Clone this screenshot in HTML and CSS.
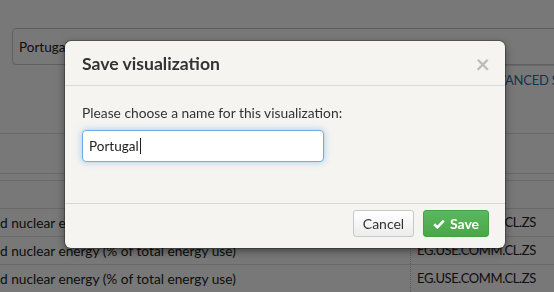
FILE: index.html
```html
<!DOCTYPE html>
<html lang="en">
<head>
    <meta charset="UTF-8">
    <title>Save visualization</title>
    <link rel="stylesheet" href="styles.css">
</head>
<body>

    <div class="page">
        <div class="searchRow">
            <span class="searchLabel">s</span>
            <div class="searchBox">Portugal</div>
        </div>
        <div class="advRow"><a class="advLink" href="#">Advanced search</a></div>
        <div class="band"></div>
        <div class="band thin"></div>
        <div class="band head"></div>
        <div class="indicators">
            <div class="indRow"><div class="indName">d nuclear energy (% of total energy use)</div><div class="indCode">EG.USE.COMM.CL.ZS</div></div>
            <div class="indRow"><div class="indName">d nuclear energy (% of total energy use)</div><div class="indCode">EG.USE.COMM.CL.ZS</div></div>
            <div class="indRow"><div class="indName">d nuclear energy (% of total energy use)</div><div class="indCode">EG.USE.COMM.CL.ZS</div></div>
        </div>
    </div>

    <div class="backdrop"></div>

    <div class="modal">
        <div class="modalHeader">
            <h3>Save visualization</h3>
            <span class="closeBtn">&times;</span>
        </div>
        <div class="modalBody">
            <p>Please choose a name for this visualization:</p>
            <div class="nameInput">Portugal<span class="caret"></span></div>
        </div>
        <div class="modalFooter">
            <button class="btn btnDefault">Cancel</button>
            <button class="btn btnSave">
                <svg width="12" height="10" viewBox="0 0 12 10"><path d="M1.2 5.2 L4.4 8.3 L10.8 1.6" fill="none" stroke="#fff" stroke-width="2.6"/></svg>
                Save
            </button>
        </div>
    </div>

</body>
</html>
```

FILE: styles.css
```css
body {
    margin: 0;
    font-family: 'Lato', sans-serif;
    background-color: #fff;
    color: #333;
    overflow: hidden;
}
.page {
    padding-top: 28px;
}
.searchRow {
    display: flex;
    align-items: center;
    height: 37px;
}
.searchLabel {
    width: 20px;
    flex-shrink: 0;
    color: #3a87c8;
    font-size: 14px;
    margin-left: -8px;
    padding-top: 6px;
}
.searchBox {
    flex: 1;
    height: 35px;
    margin-right: -20px;
    border: 1px solid #ccc;
    border-radius: 4px;
    padding-left: 6px;
    display: flex;
    align-items: center;
    font-size: 13.5px;
    color: #222;
}
.advRow {
    display: flex;
    border-top: 1px solid #ddd;
    margin-left: 479px;
    height: 67px;
    overflow: hidden;
}
.advLink {
    color: #2a6fa8;
    text-decoration: none;
    text-transform: uppercase;
    font-size: 13px;
    letter-spacing: -0.2px;
    white-space: nowrap;
    padding-top: 6px;
}
.band {
    border-top: 1px solid #ddd;
    height: 39px;
}
.band.thin {
    height: 6px;
}
.band.head {
    height: 27px;
}
.indicators {
    border-top: 1px solid #ddd;
}
.indRow {
    display: flex;
    height: 27px;
    border-bottom: 1px solid #ddd;
    font-size: 13.7px;
    color: #222;
}
.indName {
    width: 410px;
    flex-shrink: 0;
    line-height: 27px;
    white-space: nowrap;
}
.indCode {
    flex: 1;
    border-left: 1px dotted #bbb;
    padding-left: 6px;
    line-height: 27px;
    white-space: nowrap;
    font-size: 13px;
    letter-spacing: -0.4px;
}
.backdrop {
    position: fixed;
    top: 0;
    left: 0;
    right: 0;
    bottom: 0;
    background: rgba(0, 0, 0, 0.53);
}
.modal {
    position: fixed;
    top: 41px;
    left: 65px;
    width: 440px;
    background: #f5f4f1;
    border-radius: 6px;
    box-shadow: 0 3px 9px rgba(0, 0, 0, 0.45), 0 0 0 1px rgba(0, 0, 0, 0.25);
}
.modalHeader {
    height: 44px;
    padding: 0 15px 0 17px;
    display: flex;
    align-items: center;
    justify-content: space-between;
    border-bottom: 1px solid #dcd9d4;
}
.modalHeader h3 {
    margin: 0;
    font-size: 17.6px;
    font-weight: bold;
    color: #333;
}
.closeBtn {
    font-size: 25px;
    font-weight: bold;
    color: #bdbdbd;
    line-height: 1;
}
.modalBody {
    padding: 17px 17px 41px;
}
.modalBody p {
    margin: 0 0 7px;
    font-size: 13.8px;
    line-height: 20px;
    color: #333;
}
.nameInput {
    width: 234px;
    height: 30px;
    padding-left: 6px;
    border: 1px solid #66afe9;
    border-radius: 4px;
    background: #fff;
    box-shadow: 0 0 7px rgba(102, 175, 233, 0.6);
    display: flex;
    align-items: center;
    font-size: 13.5px;
    color: #222;
}
.caret {
    width: 1px;
    height: 16px;
    background: #222;
    margin-left: 1px;
}
.modalFooter {
    border-top: 1px solid #dcd9d4;
    padding: 6px 16px 11px;
    display: flex;
    justify-content: flex-end;
    gap: 9px;
}
.btn {
    height: 27px;
    border-radius: 3px;
    font-family: 'Lato', sans-serif;
    font-size: 14px;
    padding: 0;
    display: flex;
    align-items: center;
    gap: 5px;
    cursor: pointer;
}
.btnDefault {
    width: 61px;
    justify-content: center;
    background: linear-gradient(#fff, #ececec);
    border: 1px solid #c8c8c8;
    color: #333;
}
.btnSave {
    width: 66px;
    justify-content: center;
    background: linear-gradient(#5cb85c, #4aa64a);
    border: 1px solid #45a045;
    color: #fff;
    font-weight: bold;
}
```
